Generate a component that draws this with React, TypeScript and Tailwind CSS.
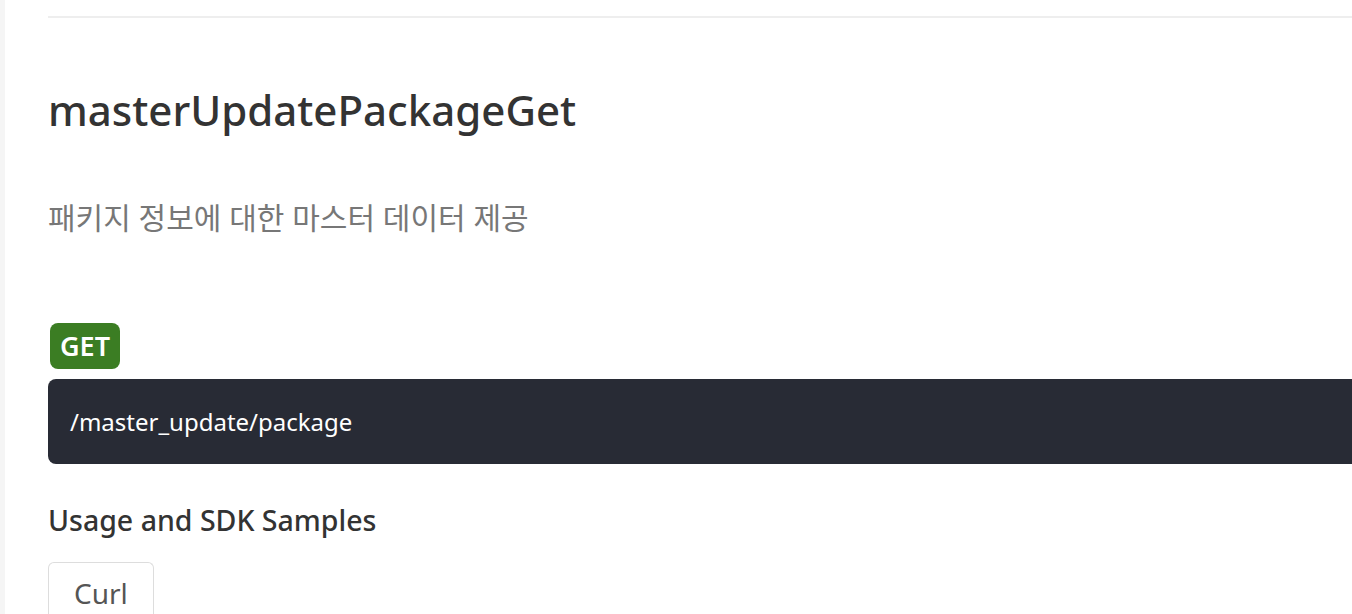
const font = { fontFamily: '"Noto Sans", "Noto Sans CJK KR", sans-serif' };

export default function App() {
  return (
    <div className="w-[1352px] h-[614px] overflow-hidden bg-white flex" style={font}>
      <div className="w-[5px] shrink-0 bg-[#f5f5f5]" />
      <div className="flex-1 pl-[43px] -mr-[40px]">
        <div className="mt-[16px] border-t-2 border-[#eeeeee]" />
        <h1 className="mt-[64px] text-[42px] leading-[56px] text-[#333333] font-medium">
          masterUpdatePackageGet
        </h1>
        <p className="mt-[59px] text-[30px] leading-[42px] text-[#777777]">
          패키지 정보에 대한 마스터 데이터 제공
        </p>
        <div className="mt-[84px] ml-[2px] inline-flex h-[46px] items-center rounded-[8px] bg-[#3b7d23] px-[10px] text-[27px] font-semibold text-white">
          GET
        </div>
        <div className="mt-[10px] h-[85px] flex items-center rounded-[8px] bg-[#282b35] pl-[22px] text-[24px] text-white">
          /master_update/package
        </div>
        <h3 className="mt-[36px] text-[28.5px] leading-[40px] text-[#333333] font-medium">
          Usage and SDK Samples
        </h3>
        <div className="mt-[22px] inline-flex h-[60px] items-start rounded-t-[6px] border border-b-0 border-[#dddddd] px-[25px] pt-[11px] text-[28px] leading-[38px] text-[#555555]">
          Curl
        </div>
      </div>
    </div>
  );
}
